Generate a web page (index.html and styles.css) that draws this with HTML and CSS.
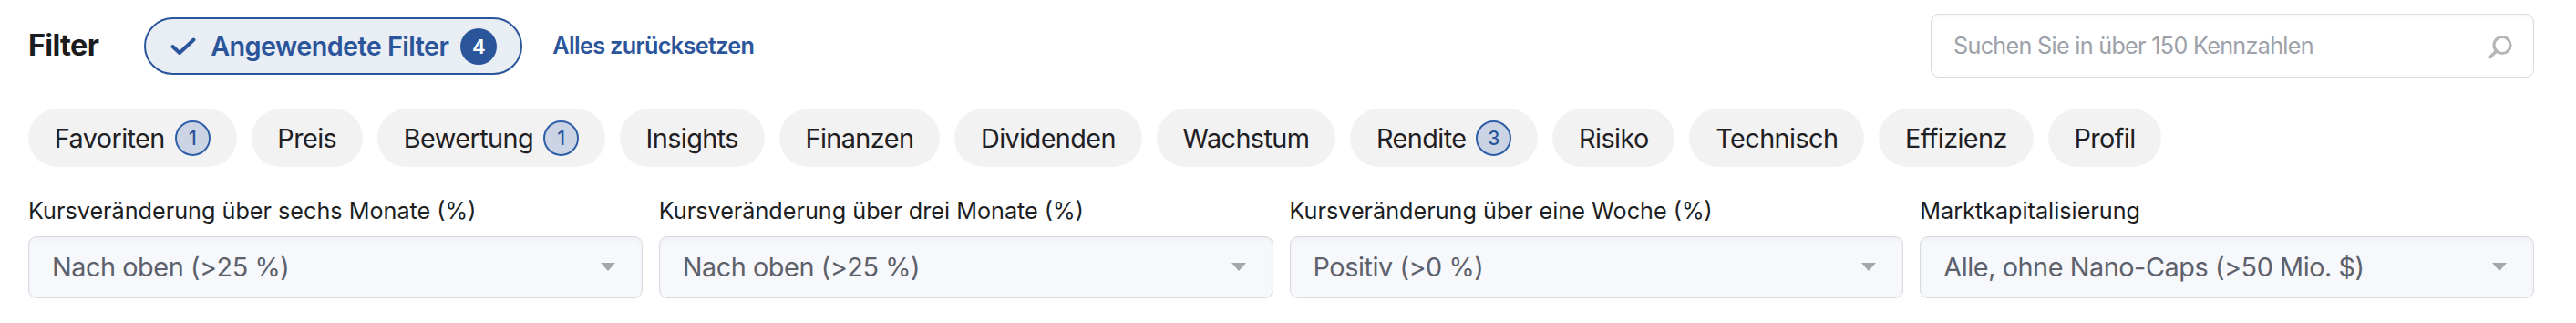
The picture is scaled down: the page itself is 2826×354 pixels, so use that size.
FILE: index.html
```html
<!DOCTYPE html>
<html lang="de">
<head>
<meta charset="utf-8">
<title>Filter</title>
<link rel="stylesheet" href="styles.css">
</head>
<body>
<div class="page">
  <div class="toprow">
    <h2 class="title">Filter</h2>
    <button class="applied">
      <svg class="check" width="28" height="20" viewBox="0 0 28 20"><polyline points="2.5,10 10,17 25.5,2.5" fill="none" stroke="#2b559b" stroke-width="4" stroke-linecap="round" stroke-linejoin="round"/></svg>
      <span>Angewendete Filter</span>
      <span class="count">4</span>
    </button>
    <a class="reset">Alles zurücksetzen</a>
    <div class="search">
      <span class="placeholder">Suchen Sie in über 150 Kennzahlen</span>
      <svg class="search-icon" width="32" height="32" viewBox="0 0 32 32"><circle cx="20" cy="15.5" r="9" fill="none" stroke="#b4b6ba" stroke-width="3.2"/><line x1="13.8" y1="21.8" x2="7" y2="28.5" stroke="#b4b6ba" stroke-width="3.6" stroke-linecap="round"/></svg>
    </div>
  </div>
  <div class="chips">
    <span class="chip">Favoriten <span class="chip-count">1</span></span>
    <span class="chip">Preis</span>
    <span class="chip">Bewertung <span class="chip-count">1</span></span>
    <span class="chip">Insights</span>
    <span class="chip">Finanzen</span>
    <span class="chip">Dividenden</span>
    <span class="chip">Wachstum</span>
    <span class="chip">Rendite <span class="chip-count">3</span></span>
    <span class="chip">Risiko</span>
    <span class="chip">Technisch</span>
    <span class="chip">Effizienz</span>
    <span class="chip">Profil</span>
  </div>
  <div class="fields">
    <div class="field">
      <div class="label">Kursveränderung über sechs Monate (%)</div>
      <div class="select"><span>Nach oben (&gt;25 %)</span><span class="caret"></span></div>
    </div>
    <div class="field">
      <div class="label">Kursveränderung über drei Monate (%)</div>
      <div class="select"><span>Nach oben (&gt;25 %)</span><span class="caret"></span></div>
    </div>
    <div class="field">
      <div class="label">Kursveränderung über eine Woche (%)</div>
      <div class="select"><span>Positiv (&gt;0 %)</span><span class="caret"></span></div>
    </div>
    <div class="field">
      <div class="label">Marktkapitalisierung</div>
      <div class="select"><span>Alle, ohne Nano-Caps (&gt;50 Mio. $)</span><span class="caret"></span></div>
    </div>
  </div>
</div>
</body>
</html>
```

FILE: styles.css
```css
* { box-sizing: border-box; }
html, body { margin: 0; padding: 0; background: #ffffff; }
body { font-family: Inter, "Noto Sans", sans-serif; color: #1d1f23; }

.page { padding: 15px 46px 0 31px; }

.toprow { display: flex; align-items: center; height: 70px; }
.title { margin: 0; font-size: 32.4px; font-weight: 700; color: #1b1c20; line-height: 1; letter-spacing: -0.02em; }
.applied {
  margin-left: 50px;
  display: flex; align-items: center;
  height: 63px; padding: 0 26px 0 27px;
  border: 2px solid #2c569c; border-radius: 32px;
  background: #e9edf4; color: #2b559b;
  font-family: inherit; font-size: 28.8px; font-weight: 600; letter-spacing: -0.02em;
  margin-top: 1px;
}
.check { margin-right: 16px; }
.count {
  margin-left: 13px; width: 40px; height: 40px; border-radius: 50%;
  background: #2b559b; color: #fff; font-size: 22px; font-weight: 600; letter-spacing: 0;
  display: flex; align-items: center; justify-content: center;
}
.reset { margin-left: 33px; color: #2b559b; font-size: 25.2px; font-weight: 600; letter-spacing: -0.025em; }
.search {
  margin-left: auto; width: 662px; height: 70px;
  border: 1.5px solid #d8dade; border-radius: 9px; background: #fff;
  box-shadow: inset 0 3px 4px rgba(0,0,0,0.035);
  display: flex; align-items: center; justify-content: space-between;
  padding: 0 22px 0 24px;
}
.placeholder { font-size: 25.2px; color: #9da1a9; letter-spacing: -0.028em; }

.chips { display: flex; gap: 16px; margin-top: 34px; }
.chip {
  display: flex; align-items: center; height: 64px; padding: 0 28.8px;
  border-radius: 32px; background: #f2f2f2; font-size: 28.8px; color: #1f2024;
  white-space: nowrap; letter-spacing: -0.02em;
}
.chip-count {
  margin-left: 11px; width: 39px; height: 39px; border-radius: 50%;
  border: 2px solid #2f5ea8; background: #cad4e4; color: #2b559b;
  font-size: 21px; font-weight: 500; letter-spacing: 0;
  display: flex; align-items: center; justify-content: center;
}

.fields { display: grid; grid-template-columns: repeat(4, 1fr); gap: 18px; margin-top: 30.6px; }
.label { font-size: 25.2px; line-height: 35px; color: #1c1e22; white-space: nowrap; }
.select {
  margin-top: 10px; height: 68px;
  border: 1.5px solid #d7d9de; border-radius: 9px; background: #f7f8fc;
  box-shadow: inset 0 3px 4px rgba(0,0,0,0.03);
  display: flex; align-items: center; justify-content: space-between;
  padding: 0 29px 0 25px;
  font-size: 28.8px; color: #5d616b; letter-spacing: -0.015em;
}
.caret {
  width: 0; height: 0;
  border-left: 8px solid transparent; border-right: 8px solid transparent;
  border-top: 9px solid #a3a6ab;
}
```
